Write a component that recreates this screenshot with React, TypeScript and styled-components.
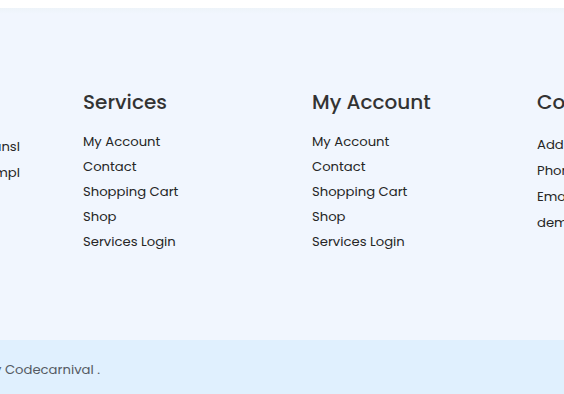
import React from "react";
import styled, { createGlobalStyle } from "styled-components";

const Global = createGlobalStyle`
  html, body { margin: 0; padding: 0; background: #ffffff; }
  body { font-family: Poppins, "Open Sans", "Noto Sans", sans-serif; overflow: hidden; }
  * { box-sizing: border-box; }
`;

const Page = styled.div`
  padding-top: 8px;
  width: 564px;
  height: 394px;
  overflow: hidden;
`;

const Footer = styled.footer`
  background: #f1f6fe;
`;

const Top = styled.div`
  height: 332px;
  padding-top: 82px;
  background: linear-gradient(#edf3f9 0px, #f1f6fe 6px);
`;

const Row = styled.div`
  display: grid;
  grid-template-columns: 263px 229px 225px 220px;
  margin-left: -180px;
`;

const Col = styled.div<{ $align?: "left" | "right"; $padRight?: number }>`
  text-align: ${(p) => p.$align ?? "left"};
  padding-right: ${(p) => p.$padRight ?? 0}px;
  white-space: nowrap;
  overflow: hidden;
`;

const Heading = styled.h4`
  margin: 0 0 15px;
  font-size: 20px;
  line-height: 24px;
  font-weight: 500;
  color: #333333;
`;

const List = styled.ul<{ $step: number; $offset?: number }>`
  list-style: none;
  margin: 0;
  padding: ${(p) => p.$offset ?? 0}px 0 0;
  font-size: 13.2px;
  line-height: ${(p) => p.$step}px;
  color: #262626;
`;

const Item = styled.li``;

const Bottom = styled.div`
  background: #e0f0fe;
  height: 54px;
  padding-top: 19px;
  font-size: 13.2px;
  line-height: 22px;
  color: #555b63;
  white-space: nowrap;
`;

const Copy = styled.p`
  margin: 0 0 0 -400px;
  width: 500px;
  text-align: right;
`;

const links = ["My Account", "Contact", "Shopping Cart", "Shop", "Services Login"];

export default function App() {
  return (
    <>
      <Global />
      <Page>
        <Footer>
          <Top>
            <Row>
              <Col $align="right" $padRight={63}>
                <Heading>&nbsp;</Heading>
                <List $step={26} $offset={5}>
                  <Item>Lorem transl</Item>
                  <Item>Ipsum exampl</Item>
                </List>
              </Col>
              <Col>
                <Heading>Services</Heading>
                <List $step={25}>
                  {links.map((l) => (
                    <Item key={l}>{l}</Item>
                  ))}
                </List>
              </Col>
              <Col>
                <Heading>My Account</Heading>
                <List $step={25}>
                  {links.map((l) => (
                    <Item key={l}>{l}</Item>
                  ))}
                </List>
              </Col>
              <Col>
                <Heading>Contact Info</Heading>
                <List $step={26} $offset={3}>
                  <Item>Address: 123 Main Street</Item>
                  <Item>Phone: +012 345 678</Item>
                  <Item>Email:</Item>
                  <Item>demo@example.com</Item>
                </List>
              </Col>
            </Row>
          </Top>
          <Bottom>
            <Copy>Copyright © 2024 All Right Reserved by Codecarnival .</Copy>
          </Bottom>
        </Footer>
      </Page>
    </>
  );
}
